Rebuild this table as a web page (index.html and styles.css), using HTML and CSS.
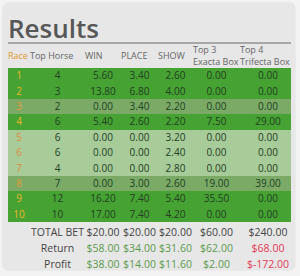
FILE: index.html
```html
<!DOCTYPE html>
<html>
<head>
<meta charset="utf-8">
<link rel="stylesheet" href="styles.css">
</head>
<body>
<div class="panel">
  <h1 class="title">Results</h1>
  <table class="results">
    <colgroup>
      <col class="c-race"><col class="c-horse"><col class="c-win"><col class="c-place"><col class="c-show"><col class="c-top3"><col class="c-top4">
    </colgroup>
    <thead>
      <tr>
        <th class="race-h">Race</th>
        <th>Top Horse</th>
        <th>WIN</th>
        <th>PLACE</th>
        <th>SHOW</th>
        <th>Top 3<br>Exacta Box</th>
        <th>Top 4<br>Trifecta Box</th>
      </tr>
    </thead>
    <tbody>
      <tr class="hit"><td class="race">1</td><td>4</td><td>5.60</td><td>3.40</td><td>2.60</td><td>0.00</td><td class="last">0.00</td></tr>
      <tr class="hit"><td class="race">2</td><td>3</td><td>13.80</td><td>6.80</td><td>4.00</td><td>0.00</td><td class="last">0.00</td></tr>
      <tr class="mid"><td class="race">3</td><td>2</td><td>0.00</td><td>3.40</td><td>2.20</td><td>0.00</td><td class="last">0.00</td></tr>
      <tr class="hit"><td class="race">4</td><td>6</td><td>5.40</td><td>2.60</td><td>2.20</td><td>7.50</td><td class="last">29.00</td></tr>
      <tr class="miss"><td class="race">5</td><td>6</td><td>0.00</td><td>0.00</td><td>3.20</td><td>0.00</td><td class="last">0.00</td></tr>
      <tr class="miss"><td class="race">6</td><td>6</td><td>0.00</td><td>0.00</td><td>2.40</td><td>0.00</td><td class="last">0.00</td></tr>
      <tr class="miss"><td class="race">7</td><td>4</td><td>0.00</td><td>0.00</td><td>2.80</td><td>0.00</td><td class="last">0.00</td></tr>
      <tr class="mid"><td class="race">8</td><td>7</td><td>0.00</td><td>3.00</td><td>2.60</td><td>19.00</td><td class="last">39.00</td></tr>
      <tr class="hit"><td class="race">9</td><td>12</td><td>16.20</td><td>7.40</td><td>5.40</td><td>35.50</td><td class="last">0.00</td></tr>
      <tr class="hit"><td class="race">10</td><td>10</td><td>17.00</td><td>7.40</td><td>4.20</td><td>0.00</td><td class="last">0.00</td></tr>
    </tbody>
    <tfoot>
      <tr><td></td><td class="label">TOTAL BET</td><td>$20.00</td><td>$20.00</td><td>$20.00</td><td>$60.00</td><td class="last">$240.00</td></tr>
      <tr class="pos"><td></td><td class="label">Return</td><td>$58.00</td><td>$34.00</td><td>$31.60</td><td>$62.00</td><td class="last neg">$68.00</td></tr>
      <tr class="pos"><td></td><td class="label">Profit</td><td>$38.00</td><td>$14.00</td><td>$11.60</td><td>$2.00</td><td class="last neg">$-172.00</td></tr>
    </tfoot>
  </table>
</div>
</body>
</html>
```

FILE: styles.css
```css
html, body {
  margin: 0;
  padding: 0;
}
body {
  background: #f3f3f3;
  width: 300px;
  height: 276px;
  overflow: hidden;
  font-family: "Open Sans", "Liberation Sans", sans-serif;
}
.panel {
  margin: 3px 0 0 3px;
  width: 292px;
  height: 267px;
  box-sizing: border-box;
  padding: 0 4px 0 5px;
  background: #e7e7e7;
  border-radius: 6px;
  box-shadow: 0 0 2px rgba(0,0,0,0.12);
}
.title {
  margin: 0;
  padding: 10px 0 0 0;
  height: 29px;
  font-size: 26px;
  line-height: 30px;
  font-weight: 600;
  color: #575757;
  border-bottom: 2px solid #a8a8a8;
}
.results {
  width: 283px;
  table-layout: fixed;
  border-collapse: collapse;
  border-spacing: 0;
}
.c-race { width: 22px; }
.c-horse { width: 55px; }
.c-win { width: 36px; }
.c-place { width: 37px; }
.c-show { width: 35px; }
.c-top3 { width: 47px; }
.c-top4 { width: 51px; }
.results th {
  font-weight: 400;
  font-size: 9px;
  line-height: 12px;
  color: #666;
  text-align: left;
  padding: 0;
  height: 23px;
  white-space: nowrap;
  vertical-align: middle;
}
.results th.race-h {
  color: #e09a30;
}
.results td {
  font-size: 10px;
  height: 15.4px;
  padding: 0;
  text-align: center;
  white-space: nowrap;
  line-height: 15px;
}
.results td.last {
  padding-left: 5px;
}
.results tbody td {
  color: #23401f;
}
.results tbody td.race {
  color: #f0b22a;
}
.results tbody tr.miss td.race {
  color: #e08c3a;
}
.results tbody tr.mid td.race {
  color: #e69a35;
}
tr.hit { background: #45a233; }
tr.mid { background: #7aaa66; }
tr.miss { background: #a8cb9a; }
.results tfoot td {
  color: #444;
  font-size: 10.5px;
  height: 16px;
  line-height: 16px;
}
.results tfoot tr:first-child td {
  padding-top: 2px;
}
.results tfoot tr.pos td {
  color: #5b9a4e;
}
.results tfoot tr.pos td.label,
.results tfoot td.label {
  color: #444;
}
.results tfoot tr.pos td.neg {
  color: #e23a55;
}
```
